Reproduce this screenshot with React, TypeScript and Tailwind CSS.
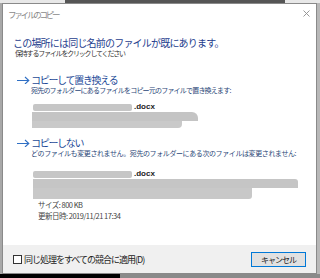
import React from "react"

function Arrow() {
  return (
    <svg width="13" height="8" viewBox="0 0 13 8" aria-hidden="true">
      <path d="M0 4.5h11.5M8 1l3.8 3.5L8 8" fill="none" stroke="#2f6fc4" strokeWidth="1.1" />
    </svg>
  )
}

function Option({
  title,
  desc,
  descTracking,
  children,
}: {
  title: string
  desc: string
  descTracking: string
  children: React.ReactNode
}) {
  return (
    <div>
      <div className="flex h-[12px] items-center">
        <div className="flex w-[18px] justify-end pr-[1px] pl-[4px]">
          <Arrow />
        </div>
        <span className="text-[10px] leading-[12px] tracking-[-1.3px] text-[#1d4a97]">{title}</span>
      </div>
      <div className={`h-[8px] pl-[18px] text-[7px] leading-[8px] whitespace-nowrap text-[#2a4677] ${descTracking}`}>
        {desc}
      </div>
      {children}
    </div>
  )
}

function FileRow() {
  return (
    <div className="flex h-[10px] items-center pl-[20px]">
      <div className="h-[7px] w-[99px] rounded-[2px] bg-[#c6c6c6]" />
      <span className="ml-[2px] font-['Liberation_Sans',sans-serif] text-[8px] leading-[10px] font-semibold text-[#222]">
        .docx
      </span>
    </div>
  )
}

export default function App() {
  return (
    <div className="flex h-[278px] w-[320px] flex-col overflow-hidden bg-[#9a9a9a] font-['Noto_Sans_CJK_JP',sans-serif]">
      <div className="flex h-[3px]">
        <div className="w-[65px] bg-[#e8e8e8]" />
        <div className="w-[220px] bg-[#555]" />
        <div className="flex-1 bg-[#e8e8e8]" />
      </div>

      <div className="flex h-[271px]">
        <div className="w-[2px] bg-[#a8a8a8]" />
        <div className="flex w-[315px] flex-col border border-[#8a8a8a] bg-white">
          <div className="flex h-[19px] items-center justify-between pr-[6px] pl-[5px]">
            <span className="text-[8.5px] leading-[10px] tracking-[-2.2px] text-[#8a8a8a]">ファイルのコピー</span>
            <svg width="7" height="7" viewBox="0 0 7 7" aria-hidden="true">
              <path d="M0.5 0.5l6 6M6.5 0.5l-6 6" stroke="#8c8c8c" strokeWidth="0.9" />
            </svg>
          </div>

          <div className="flex-1 pl-[10px]">
            <div className="mt-[14px] h-[12px] text-[10px] leading-[12px] tracking-[-0.8px] whitespace-nowrap text-[#1f3e8e]">
              この場所には同じ名前のファイルが既にあります。
            </div>
            <div className="h-[8px] pl-[2px] text-[7px] leading-[8px] tracking-[-1.2px] whitespace-nowrap text-[#333]">
              保持するファイルをクリックしてください
            </div>

            <div className="mt-[17px]">
              <Option
                title="コピーして置き換える"
                desc="宛先のフォルダーにあるファイルをコピー元のファイルで置き換えます:"
                descTracking="tracking-[-0.8px]"
              >
                <div className="mt-[8px]">
                  <FileRow />
                </div>
                <div className="pl-[19px]">
                  <div className="h-[9px] w-[166px] rounded-tr-[6px] bg-[#c4c4c4]" />
                  <div className="h-[7px] w-[150px] rounded-br-[4px] bg-[#c9c9c9]" />
                </div>
              </Option>
            </div>

            <div className="mt-[9px]">
              <Option
                title="コピーしない"
                desc="どのファイルも変更されません。宛先のフォルダーにある次のファイルは変更されません:"
                descTracking="tracking-[-0.4px]"
              >
                <div className="mt-[12px]">
                  <FileRow />
                </div>
                <div className="pl-[20px]">
                  <div className="h-[9px] w-[265px] rounded-tr-[3px] bg-[#c5c5c5]" />
                  <div className="h-[11px] w-[219px] rounded-br-[3px] bg-[#c8c8c8]" />
                </div>
                <div className="mt-[1px] pl-[25px] text-[7.5px] leading-[10px] tracking-[-0.5px] whitespace-nowrap text-[#444]">
                  <div>サイズ: 800 KB</div>
                  <div className="mt-[1px]">更新日時: 2019/11/21 17:34</div>
                </div>
              </Option>
            </div>
          </div>

          <div className="flex h-[28px] items-center justify-between bg-[#f0f0f0] pr-[10px] pl-[10px]">
            <label className="flex items-center">
              <span className="h-[9px] w-[9px] border border-[#333] bg-white" />
              <span className="ml-[2px] text-[9px] leading-[11px] tracking-[-1px] whitespace-nowrap text-[#222]">
                同じ処理をすべての競合に適用(D)
              </span>
            </label>
            <button className="h-[15px] w-[55px] border border-[#0078d7] bg-[#e1e1e1] text-[8px] leading-[13px] tracking-[-1px] text-[#222]">
              キャンセル
            </button>
          </div>
        </div>
        <div className="flex-1 bg-[#b8b8b8]" />
      </div>

      <div className="flex h-[4px]">
        <div className="w-[120px] bg-black" />
        <div className="flex-1 bg-[#8a8a8a]" />
      </div>
    </div>
  )
}
